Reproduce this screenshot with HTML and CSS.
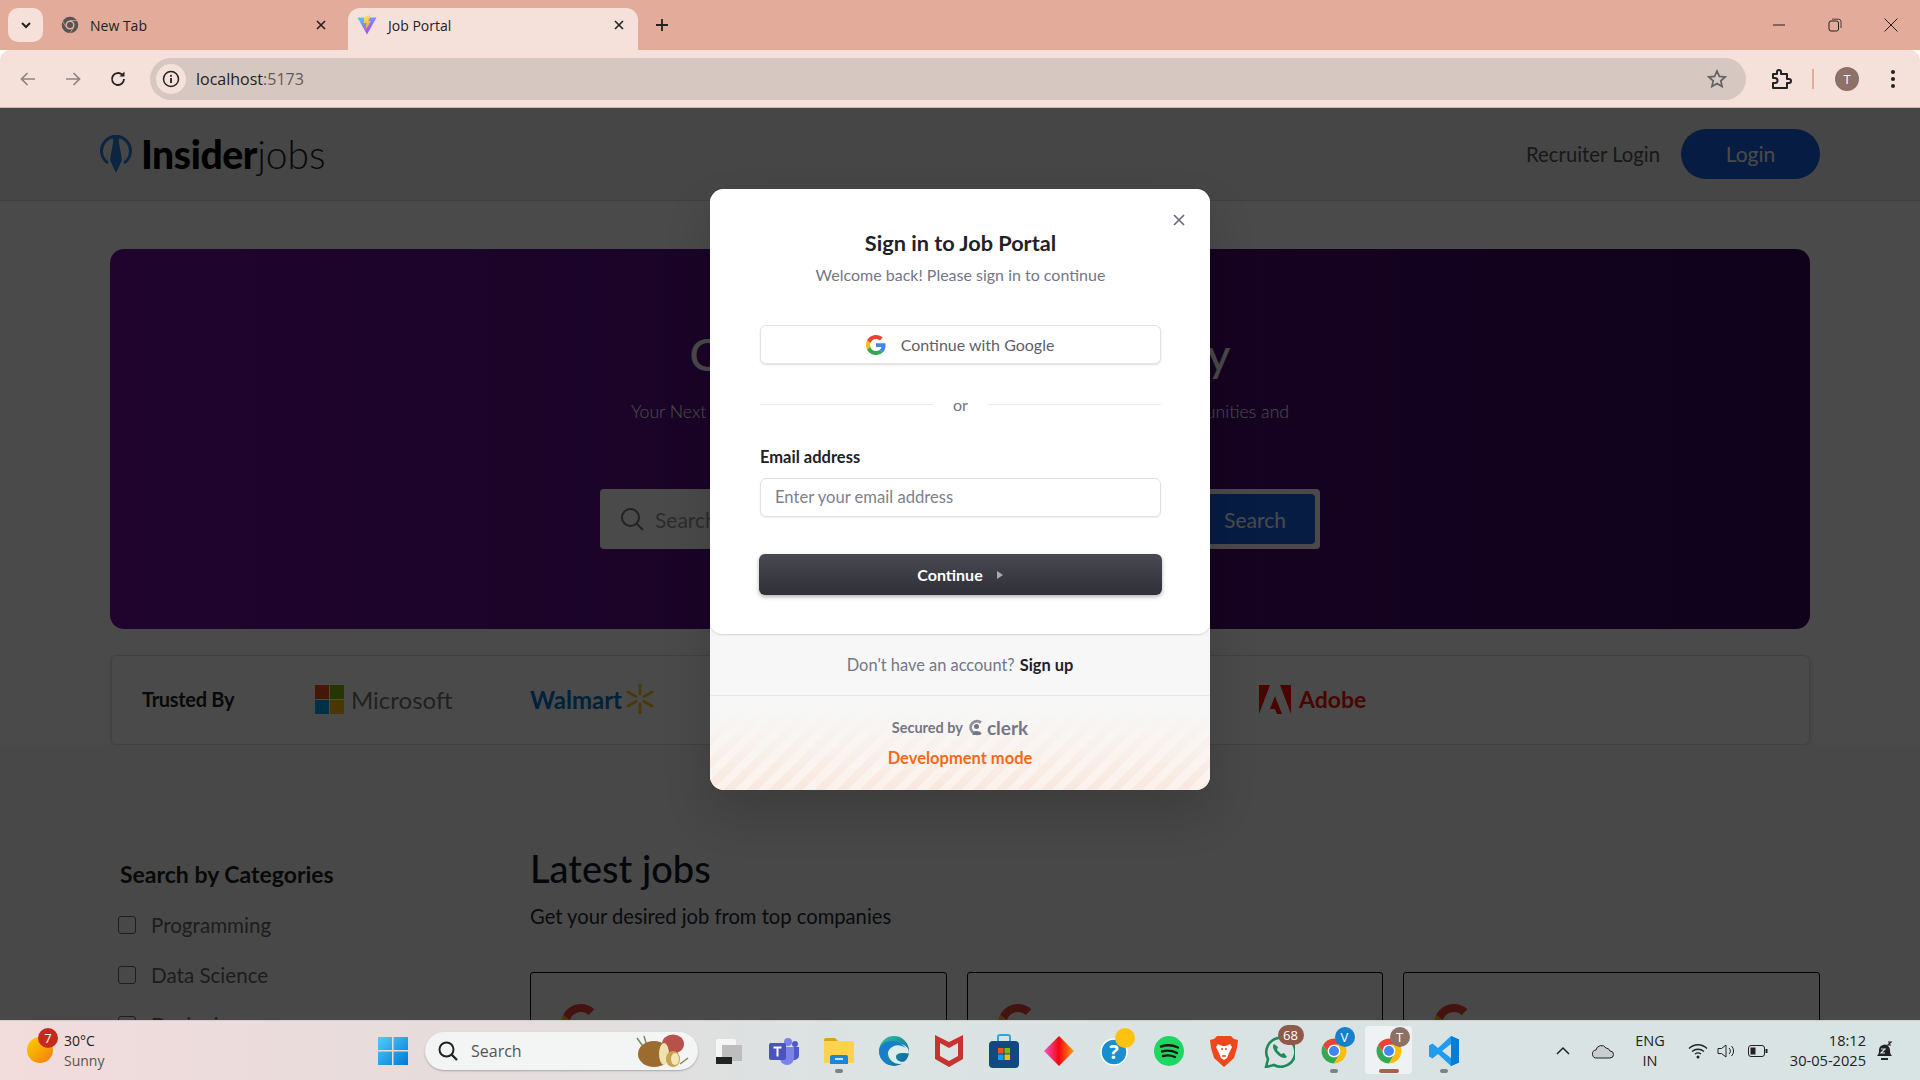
FILE: index.html
```html
<!DOCTYPE html>
<html lang="en">
<head>
    <meta charset="UTF-8">
    <meta name="viewport" content="width=device-width, initial-scale=1.0">
    <title>Job Portal</title>
    <link rel="stylesheet" href="styles.css">
</head>
<body>
    <svg class="sprite" width="0" height="0">
        <symbol id="google" viewBox="0 0 48 48">
            <path fill="#EA4335" d="M24 9.5c3.54 0 6.71 1.22 9.21 3.6l6.85-6.85C35.9 2.38 30.47 0 24 0 14.62 0 6.51 5.38 2.56 13.22l7.98 6.19C12.43 13.72 17.74 9.5 24 9.5z"/>
            <path fill="#4285F4" d="M46.98 24.55c0-1.57-.15-3.09-.38-4.55H24v9.02h12.94c-.58 2.96-2.26 5.48-4.78 7.18l7.73 6c4.51-4.18 7.09-10.36 7.09-17.65z"/>
            <path fill="#FBBC05" d="M10.53 28.59c-.48-1.45-.76-2.99-.76-4.59s.27-3.14.76-4.59l-7.98-6.19C.92 16.46 0 20.12 0 24c0 3.88.92 7.54 2.56 10.78l7.97-6.19z"/>
            <path fill="#34A853" d="M24 48c6.48 0 11.93-2.13 15.89-5.81l-7.73-6c-2.15 1.45-4.92 2.3-8.16 2.3-6.26 0-11.57-4.22-13.47-9.91l-7.98 6.19C6.51 42.62 14.62 48 24 48z"/>
        </symbol>
        <symbol id="chrome" viewBox="0 0 48 48">
            <path fill="#EA4335" d="M6.68 14A20 20 0 0 1 41.32 14H24A10 10 0 0 0 15.34 29Z"/>
            <path fill="#34A853" d="M6.68 14A20 20 0 0 0 24 44L32.66 29A10 10 0 0 1 15.34 29Z"/>
            <path fill="#FBBC05" d="M41.32 14H24A10 10 0 0 1 32.66 29L24 44A20 20 0 0 0 41.32 14Z"/>
            <circle cx="24" cy="24" r="10" fill="#fff"/>
            <circle cx="24" cy="24" r="8" fill="#4285F4"/>
        </symbol>
    </svg>

    <!-- browser tabs -->
    <div class="tabstrip">
        <div class="tab-search">
            <svg width="12" height="12" viewBox="0 0 12 12"><path d="M2 4l4 4 4-4" fill="none" stroke="#222" stroke-width="2"/></svg>
        </div>
        <div class="tab tab-new">
            <svg class="tab-icon" width="18" height="18" viewBox="0 0 48 48">
                <circle cx="24" cy="24" r="22" fill="#555"/>
                <circle cx="24" cy="24" r="12" fill="#e3ab9a"/>
                <circle cx="24" cy="24" r="8" fill="#555"/>
                <path d="M24 12h22M14 30L3 12M34 30L22 48" stroke="#e3ab9a" stroke-width="2"/>
            </svg>
            <span class="tab-title">New Tab</span>
            <svg class="tab-close" width="10" height="10" viewBox="0 0 10 10"><path d="M1 1l8 8M9 1l-8 8" stroke="#222" stroke-width="1.6"/></svg>
        </div>
        <div class="tab active">
            <svg class="tab-icon" width="20" height="20" viewBox="0 0 20 20">
                <defs>
                    <linearGradient id="viteA" x1="0" y1="0" x2="0.6" y2="1"><stop offset="0" stop-color="#41d1ff"/><stop offset="1" stop-color="#bd34fe"/></linearGradient>
                    <linearGradient id="viteB" x1="0" y1="0" x2="0.4" y2="1"><stop offset="0" stop-color="#ffea83"/><stop offset="1" stop-color="#ffa800"/></linearGradient>
                </defs>
                <path fill="url(#viteA)" d="M0.5 2.5L19.5 2.5 10 19.5Z"/>
                <path fill="url(#viteB)" d="M7.5 0.5L13.5 0.5 11.5 6 14 6 8.5 15 9.5 8 6.5 8Z"/>
            </svg>
            <span class="tab-title">Job Portal</span>
            <svg class="tab-close" width="10" height="10" viewBox="0 0 10 10"><path d="M1 1l8 8M9 1l-8 8" stroke="#222" stroke-width="1.6"/></svg>
        </div>
        <svg class="new-tab" width="14" height="14" viewBox="0 0 14 14"><path d="M7 1v12M1 7h12" stroke="#222" stroke-width="1.8"/></svg>
        <div class="win-controls">
            <svg width="14" height="14" viewBox="0 0 14 14"><path d="M1 7h12" stroke="#222"/></svg>
            <svg width="14" height="14" viewBox="0 0 14 14"><rect x="1" y="3" width="9.5" height="10" rx="2" fill="none" stroke="#222"/><path d="M4 1.2h6.5a2.5 2.5 0 0 1 2.5 2.5V10" fill="none" stroke="#222" stroke-width=".8"/></svg>
            <svg width="14" height="14" viewBox="0 0 14 14"><path d="M.5.5l13 13M13.5.5l-13 13" stroke="#222"/></svg>
        </div>
    </div>

    <!-- address bar -->
    <div class="toolbar">
        <svg class="nav-icon" width="18" height="18" viewBox="0 0 18 18"><path d="M16 9H3M8.5 3L2.5 9l6 6" fill="none" stroke="#8d8582" stroke-width="1.7"/></svg>
        <svg class="nav-icon" width="18" height="18" viewBox="0 0 18 18"><path d="M2 9h13M9.5 3l6 6-6 6" fill="none" stroke="#8d8582" stroke-width="1.7"/></svg>
        <svg class="nav-icon" width="18" height="18" viewBox="0 0 18 18"><path d="M15 9a6 6 0 1 1-1.8-4.3" fill="none" stroke="#222" stroke-width="1.8"/><path d="M15.5 1.5v5h-5z" fill="#222"/></svg>
        <div class="omnibox">
            <div class="site-info">
                <svg width="18" height="18" viewBox="0 0 18 18"><circle cx="9" cy="9" r="7.5" fill="none" stroke="#222" stroke-width="1.5"/><path d="M9 8v5M9 5v1.8" stroke="#222" stroke-width="1.8"/></svg>
            </div>
            <span class="url">localhost<span class="url-port">:5173</span></span>
            <svg class="star" width="20" height="20" viewBox="0 0 20 20"><path d="M10 2l2.4 5.4 5.8.6-4.4 3.9 1.3 5.7-5.1-3-5.1 3 1.3-5.7L1.8 8l5.8-.6z" fill="none" stroke="#5f6368" stroke-width="1.7"/></svg>
        </div>
        <svg class="ext-icon" width="22" height="22" viewBox="0 0 22 22"><path d="M3 6h4V4a2 2 0 0 1 4 0v2h6v5h2a2 2 0 0 1 0 4h-2v5H3v-5h2a2.5 2.5 0 0 0 0-5H3z" fill="none" stroke="#222" stroke-width="2" stroke-linejoin="round"/></svg>
        <div class="toolbar-sep"></div>
        <div class="avatar">T</div>
        <svg class="menu-dots" width="6" height="20" viewBox="0 0 6 20"><circle cx="3" cy="3" r="2" fill="#222"/><circle cx="3" cy="10" r="2" fill="#222"/><circle cx="3" cy="17" r="2" fill="#222"/></svg>
    </div>

    <!-- the app behind the modal -->
    <div class="page">
        <header class="navbar">
            <div class="logo">
                <svg width="32" height="40" viewBox="0 0 32 40">
                    <path d="M8 29A14.5 14.5 0 1 1 24 29" fill="none" stroke="#2a7fe0" stroke-width="3"/>
                    <path d="M12 1h8l-1.5 5 3.5 20L16 39 10 26l3.5-20z" fill="#2a7fe0"/>
                </svg>
                <span class="logo-text"><b>Insider</b>jobs</span>
            </div>
            <div class="nav-actions">
                <span class="recruiter">Recruiter Login</span>
                <span class="login-btn">Login</span>
            </div>
        </header>

        <main class="content">
            <section class="hero">
                <h1>Over 10,000+ jobs to apply</h1>
                <p>Your Next Big Career Move Starts Right Here - Explore the Best Job Opportunities and<br>Take the First Step Toward Your Future!</p>
                <div class="hero-search">
                    <svg width="24" height="24" viewBox="0 0 24 24"><circle cx="10.5" cy="10.5" r="8.5" fill="none" stroke="#777" stroke-width="2"/><path d="M17 17l6 6" stroke="#777" stroke-width="2"/></svg>
                    <span class="hero-placeholder">Search for jobs</span>
                    <span class="hero-btn">Search</span>
                </div>
            </section>

            <section class="trusted">
                <span class="trusted-title">Trusted By</span>
                <div class="brand brand-ms">
                    <svg width="29" height="29" viewBox="0 0 29 29">
                        <rect width="14" height="14" fill="#f25022"/><rect x="15" width="14" height="14" fill="#7fba00"/>
                        <rect y="15" width="14" height="14" fill="#00a4ef"/><rect x="15" y="15" width="14" height="14" fill="#ffb900"/>
                    </svg>
                    <span>Microsoft</span>
                </div>
                <div class="brand brand-walmart">
                    <span>Walmart</span>
                    <svg width="28" height="30" viewBox="0 0 28 30"><path d="M14 1v9M14 20v9M2 8l8 4.5M26 8l-8 4.5M2 22l8-4.5M26 22l-8-4.5" stroke="#ffc220" stroke-width="3" stroke-linecap="round"/></svg>
                </div>
                <div class="brand brand-adobe">
                    <svg width="32" height="29" viewBox="0 0 32 29"><path d="M0 0h11L0 29zM32 0H21l11 29zM16 11l7 18h-5l-2-5h-5z" fill="#fa0f00"/></svg>
                    <span>Adobe</span>
                </div>
            </section>

            <section class="listing">
                <aside class="filters">
                    <h3>Search by Categories</h3>
                    <label class="filter"><span class="check"></span>Programming</label>
                    <label class="filter"><span class="check"></span>Data Science</label>
                    <label class="filter"><span class="check"></span>Designing</label>
                </aside>
                <div class="jobs">
                    <h2>Latest jobs</h2>
                    <p>Get your desired job from top companies</p>
                    <div class="job-grid">
                        <div class="job-card"><svg width="40" height="40"><use href="#google"/></svg></div>
                        <div class="job-card"><svg width="40" height="40"><use href="#google"/></svg></div>
                        <div class="job-card"><svg width="40" height="40"><use href="#google"/></svg></div>
                    </div>
                </div>
            </section>
        </main>

        <div class="backdrop"></div>

        <!-- sign in modal -->
        <div class="modal">
            <div class="modal-card">
                <svg class="modal-close" width="12" height="12" viewBox="0 0 12 12"><path d="M1 1l10 10M11 1L1 11" stroke="#6a6b78" stroke-width="1.7"/></svg>
                <h2 class="modal-title">Sign in to Job Portal</h2>
                <p class="modal-sub">Welcome back! Please sign in to continue</p>
                <button class="google-btn">
                    <svg width="20" height="20"><use href="#google"/></svg>
                    Continue with Google
                </button>
                <div class="divider"><span>or</span></div>
                <label class="field-label">Email address</label>
                <div class="email-input">Enter your email address</div>
                <button class="continue-btn">
                    Continue
                    <svg width="8" height="8" viewBox="0 0 8 8"><path d="M1 0l6 4-6 4z" fill="#a9a9b0"/></svg>
                </button>
            </div>
            <div class="modal-signup">Don't have an account? <b>Sign up</b></div>
            <div class="modal-foot">
                <div class="secured">
                    Secured by
                    <svg width="16" height="17" viewBox="0 0 16 17"><path d="M14 2.5A7.8 7.8 0 1 0 14 14.5L11.8 12.3A4.8 4.8 0 1 1 11.8 4.7z" fill="#8e8f9b"/><circle cx="8.5" cy="7.5" r="2.5" fill="#747686"/><path d="M4.5 16a4 4 0 0 1 8 0z" fill="#747686"/></svg>
                    <span class="clerk">clerk</span>
                </div>
                <div class="dev-mode">Development mode</div>
            </div>
        </div>
    </div>

    <!-- windows taskbar -->
    <footer class="taskbar">
        <div class="weather">
            <span class="sun"></span>
            <span class="weather-badge">7</span>
            <div class="weather-text">
                <span>30°C</span>
                <span class="weather-sub">Sunny</span>
            </div>
        </div>
        <svg class="start" width="30" height="30" viewBox="0 0 30 30">
            <defs><linearGradient id="win" x1="0" y1="0" x2="1" y2="1"><stop offset="0" stop-color="#52cdfa"/><stop offset="1" stop-color="#0078d4"/></linearGradient></defs>
            <path fill="url(#win)" d="M0 1h14v13H0zM15.5 1H30v13H15.5zM0 15.5h14V29H0zM15.5 15.5H30V29H15.5z"/>
        </svg>
        <div class="task-search">
            <svg width="22" height="22" viewBox="0 0 22 22"><circle cx="9.5" cy="9.5" r="7" fill="none" stroke="#222" stroke-width="2"/><path d="M14.5 14.5l5.5 5.5" stroke="#222" stroke-width="2.4"/></svg>
            <span>Search</span>
            <svg class="potato" width="58" height="38" viewBox="0 0 58 38">
                <path d="M3 6l10 14M10 4l3 10M54 26l-8 6" stroke="#7d8a5c" stroke-width="1.5"/>
                <ellipse cx="39" cy="12" rx="11" ry="9.5" fill="#b8504c"/>
                <ellipse cx="20" cy="22" rx="16" ry="13" fill="#9c6b30"/>
                <ellipse cx="30" cy="22" rx="5" ry="11" fill="#f0e2ae"/>
                <ellipse cx="39" cy="27" rx="7" ry="8" fill="#c9a24e"/>
                <ellipse cx="41" cy="27" rx="4" ry="6" fill="#f3e7b8"/>
            </svg>
        </div>
        <div class="task-apps">
            <div class="app"><svg width="26" height="28" viewBox="0 0 26 28"><rect x="0" y="2" width="20" height="18" rx="2" fill="#f6f6f6"/><rect x="6" y="8" width="20" height="16" fill="#bdbdbd"/><rect x="0" y="20" width="16" height="7" fill="#222"/></svg></div>
            <div class="app"><svg width="30" height="28" viewBox="0 0 30 28"><circle cx="19" cy="5" r="4" fill="#7b83eb"/><circle cx="26" cy="7" r="3" fill="#5059c9"/><path d="M22 10h8v9a5 5 0 0 1-8 3z" fill="#5059c9"/><path d="M11 10h14v11a7 7 0 0 1-14 0z" fill="#7b83eb"/><rect x="0" y="6" width="17" height="17" rx="2" fill="#4b53bc"/><path d="M4.5 10.5h8M8.5 10.5v9" stroke="#fff" stroke-width="2"/></svg></div>
            <div class="app running"><svg width="30" height="28" viewBox="0 0 30 28"><path d="M0 3a2 2 0 0 1 2-2h9l3 3h-14z" fill="#d9a21b"/><path d="M0 4h28a2 2 0 0 1 2 2v20H0z" fill="#fcd34d"/><path d="M6 20a2 2 0 0 1 2-2h14a2 2 0 0 1 2 2v7H6z" fill="#1a86d8"/><path d="M11 22h8" stroke="#fff" stroke-width="1.5"/></svg></div>
            <div class="app"><svg width="30" height="30" viewBox="0 0 30 30"><defs><linearGradient id="edge" x1="0" y1="0" x2="1" y2="1"><stop offset="0" stop-color="#2fc6a0"/><stop offset="1" stop-color="#0c59a4"/></linearGradient></defs><circle cx="15" cy="15" r="15" fill="url(#edge)"/><path d="M30 17c0-6-5-9-10-9-6 0-11 4-11 9 0 6 5 11 12 11 3 0 5-1 7-3-5 2-11 0-11-4 0-3 3-4 6-4 4 0 5 1 7 0z" fill="#dceee9"/><path d="M0 15C1 8 7 5 13 5c6 0 10 3 14 7-3-2-8-4-12-2-5 2-8 7-6 13 1 2 2 4 4 6C7 29 0 23 0 15z" fill="#1a7dcc"/></svg></div>
            <div class="app"><svg width="28" height="32" viewBox="0 0 28 32"><path d="M0 0l14 7 14-7v24l-14 8-14-8zM5 8v13l9 5 9-5V8l-9 5z" fill="#c8322f" fill-rule="evenodd"/></svg></div>
            <div class="app"><svg width="30" height="34" viewBox="0 0 30 34"><path d="M9 8V3a2 2 0 0 1 2-2h8a2 2 0 0 1 2 2v5" fill="none" stroke="#29a8e0" stroke-width="2"/><rect y="7" width="30" height="27" rx="4" fill="#11487f"/><rect x="9" y="14" width="5.5" height="5.5" fill="#f25022"/><rect x="15.5" y="14" width="5.5" height="5.5" fill="#7fba00"/><rect x="9" y="20.5" width="5.5" height="5.5" fill="#00a4ef"/><rect x="15.5" y="20.5" width="5.5" height="5.5" fill="#ffb900"/></svg></div>
            <div class="app"><svg width="30" height="30" viewBox="0 0 30 30"><defs><linearGradient id="gem" x1="0" y1="0" x2="1" y2="0"><stop offset="0" stop-color="#f355c8"/><stop offset=".5" stop-color="#f4050f"/><stop offset="1" stop-color="#fca311"/></linearGradient></defs><path d="M15 0l15 15-15 15L0 15z" fill="url(#gem)"/></svg></div>
            <div class="app"><div class="app-wrap"><svg width="30" height="30" viewBox="0 0 30 30"><circle cx="15" cy="16" r="13" fill="#1a8fd0" stroke="#fff" stroke-width="1.5"/><text x="15" y="23" class="help-mark">?</text></svg><span class="dot-yellow"></span></div></div>
            <div class="app"><svg width="30" height="30" viewBox="0 0 30 30"><circle cx="15" cy="15" r="15" fill="#1ed760"/><path d="M7 10.5c6-2 12-1.5 17 1M8 15.5c5-1.5 10-1 15 1.5M9 20c4-1 8-.8 12 1" fill="none" stroke="#191414" stroke-width="2.4" stroke-linecap="round"/></svg></div>
            <div class="app"><svg width="28" height="32" viewBox="0 0 28 32"><path d="M7 1h14l3 3 4 1-1 8-3 10-10 9-10-9-3-10-1-8 4-1z" fill="#f0461c"/><path d="M8 9l4 2h4l4-2 2 3-3 6-2 5-3 2-3-2-2-5-3-6z" fill="#fff"/><path d="M11 14h2M15 14h2M12 21h4" stroke="#f0461c" stroke-width="1.5"/></svg></div>
            <div class="app"><div class="app-wrap"><svg width="32" height="34" viewBox="0 0 32 34"><path d="M3 33l2-8A14.5 14.5 0 1 1 11 31z" fill="none" stroke="#1f8a5b" stroke-width="2.6"/><path d="M11 10c-2 2-1 6 3 10s8 5 10 3l-3-4-3 1-4-4 1-3z" fill="#1f8a5b"/></svg><span class="app-badge">68</span></div></div>
            <div class="app running"><div class="app-wrap"><svg width="30" height="30"><use href="#chrome"/></svg><span class="app-badge badge-blue">V</span></div></div>
            <div class="app current"><div class="app-wrap"><svg width="30" height="30"><use href="#chrome"/></svg><span class="app-badge badge-t">T</span></div></div>
            <div class="app running"><svg width="30" height="30" viewBox="0 0 30 30"><path d="M22 0l8 3.5v23L22 30 9 18l-5.5 4.5L0 20.5v-11L3.5 7.5 9 12z" fill="#1f9cf0"/><path d="M22 8l-9 7 9 7z" fill="#d8e3e3"/><path d="M22 0l8 3.5v23L22 30z" fill="#0a7cd1"/></svg></div>
        </div>
        <div class="tray">
            <svg width="14" height="14" viewBox="0 0 14 14"><path d="M1 10l6-6 6 6" fill="none" stroke="#222" stroke-width="1.5"/></svg>
            <svg class="tray-cloud" width="22" height="16" viewBox="0 0 22 16"><path d="M5 15a4 4 0 0 1-1-8 5.5 5.5 0 0 1 10-2 4.5 4.5 0 0 1 4 3 3.5 3.5 0 0 1 0 7z" fill="#c9cdcd" stroke="#222"/></svg>
            <div class="lang"><span>ENG</span><span>IN</span></div>
            <svg class="tray-wifi" width="20" height="16" viewBox="0 0 20 16"><path d="M1 5.5c5-5 13-5 18 0M4 8.5c3.5-3 8.5-3 12 0M7 11c2-1.5 4-1.5 6 0" fill="none" stroke="#222" stroke-width="1.3"/><circle cx="10" cy="14" r="1.5" fill="#222"/></svg>
            <svg class="tray-vol" width="20" height="16" viewBox="0 0 20 16"><path d="M1 5.5h3.5L9 2v12L4.5 10.5H1z" fill="none" stroke="#222"/><path d="M12 5a4 4 0 0 1 0 6M14.5 3a7 7 0 0 1 0 10" fill="none" stroke="#222"/></svg>
            <svg class="tray-batt" width="20" height="14" viewBox="0 0 20 14"><rect x=".5" y="1.5" width="16" height="11" rx="2.5" fill="none" stroke="#222"/><rect x="2.5" y="3.5" width="5" height="7" fill="#222"/><rect x="17.5" y="5" width="2" height="4" fill="#222"/></svg>
            <div class="clock"><span>18:12</span><span>30-05-2025</span></div>
            <svg class="tray-bell" width="18" height="20" viewBox="0 0 18 20"><path d="M1 15c2-2 2-4 2-6a5.5 5.5 0 0 1 10-3 6 6 0 0 1 1 3c0 2 0 4 2 6z" fill="#222"/><rect x="5" y="17" width="7" height="2" fill="#222"/><path d="M5 8h4l-4 4h4" fill="none" stroke="#d8e3e3" stroke-width="1.2"/><path d="M12 1h3l-3 3h3" fill="none" stroke="#222" stroke-width="1.2"/></svg>
        </div>
    </footer>
</body>
</html>
```

FILE: styles.css
```css
* {
    box-sizing: border-box;
}
html, body {
    margin: 0;
    height: 100%;
}
body {
    width: 1920px;
    height: 1080px;
    overflow: hidden;
    display: flex;
    flex-direction: column;
    font-family: 'Open Sans', sans-serif;
    color: #222;
}
.sprite {
    position: absolute;
}

/* Browser chrome */
.tabstrip {
    height: 50px;
    background: #e3ab9a;
    display: flex;
    align-items: flex-end;
    padding-left: 8px;
    flex-shrink: 0;
}
.tab-search {
    width: 35px;
    height: 34px;
    margin-bottom: 8px;
    background: #f5e1da;
    border-radius: 10px;
    display: flex;
    align-items: center;
    justify-content: center;
}
.tab {
    height: 42px;
    display: flex;
    align-items: center;
    padding: 0 14px 8px 18px;
    font-size: 14px;
    border-radius: 12px 12px 0 0;
}
.tab-new {
    width: 297px;
}
.tab.active {
    width: 290px;
    background: #f5e1da;
    margin-left: 8px;
    padding-left: 9px;
}
.tab-icon {
    margin-right: 11px;
    flex-shrink: 0;
}
.tab-title {
    flex: 1;
}
.new-tab {
    margin: 0 0 18px 17px;
}
.win-controls {
    margin-left: auto;
    height: 50px;
    display: flex;
    align-items: center;
    gap: 42px;
    padding-right: 22px;
}
.toolbar {
    height: 58px;
    background: #f5e1da;
    border-bottom: 1px solid #cdb9b1;
    border-radius: 10px 10px 0 0;
    display: flex;
    align-items: center;
    padding: 1px 19px 0 19px;
    flex-shrink: 0;
}
.nav-icon {
    margin-right: 27px;
}
.nav-icon:nth-of-type(3) {
    margin-right: 23px;
}
.omnibox {
    width: 1596px;
    height: 42px;
    border-radius: 21px;
    background: #d6c7c0;
    display: flex;
    align-items: center;
    padding: 0 19px 0 6px;
    font-size: 16px;
}
.site-info {
    width: 30px;
    height: 30px;
    border-radius: 50%;
    background: #f5e1da;
    display: flex;
    align-items: center;
    justify-content: center;
    margin-right: 10px;
}
.url {
    flex: 1;
}
.url-port {
    color: #5f5c5a;
}
.ext-icon {
    margin-left: 24px;
}
.toolbar-sep {
    width: 2px;
    height: 20px;
    background: #e3ab9a;
    margin: 0 21px 0 20px;
}
.avatar {
    width: 24px;
    height: 24px;
    border-radius: 50%;
    background: #8d7066;
    color: #fff;
    font-size: 13px;
    display: flex;
    align-items: center;
    justify-content: center;
}
.menu-dots {
    margin-left: 31px;
}

/* The job portal page, dimmed by the backdrop */
.page {
    flex: 1;
    position: relative;
    overflow: hidden;
    background: #fff;
    font-family: 'Lato', sans-serif;
}
.navbar {
    height: 93px;
    background: #f0f0f0;
    border-bottom: 1px solid #d8d8d8;
    display: flex;
    align-items: center;
    justify-content: space-between;
    padding: 0 100px;
}
.logo {
    display: flex;
    align-items: center;
    gap: 9px;
}
.logo-text {
    font-size: 39px;
    font-weight: 300;
    color: #222;
}
.logo-text b {
    font-weight: 900;
    color: #000;
    letter-spacing: -0.4px;
}
.nav-actions {
    display: flex;
    align-items: center;
    gap: 21px;
    font-size: 20.3px;
    padding-bottom: 1px;
}
.recruiter {
    color: #555;
}
.login-btn {
    width: 139px;
    height: 50px;
    border-radius: 25px;
    background: #1560e6;
    color: #fff;
    font-size: 21px;
    display: flex;
    align-items: center;
    justify-content: center;
}
.content {
    padding: 48px 110px 0;
}
.hero {
    height: 380px;
    border-radius: 14px;
    background: linear-gradient(to right, #6e119e, #37075d);
    color: #fff;
    text-align: center;
    padding-top: 77px;
}
.hero h1 {
    margin: 0;
    font-size: 45px;
    line-height: 56px;
    font-weight: 500;
}
.hero p {
    margin: 17px 0 0;
    font-size: 17.7px;
    line-height: 26px;
    font-weight: 300;
}
.hero-search {
    width: 720px;
    height: 60px;
    margin: 38px auto 0;
    background: #fff;
    border-radius: 4px;
    display: flex;
    align-items: center;
    padding: 0 5px 0 20px;
    font-size: 21px;
    color: #999;
}
.hero-placeholder {
    flex: 1;
    text-align: left;
    margin-left: 11px;
}
.hero-btn {
    width: 120px;
    height: 50px;
    border-radius: 4px;
    background: #1560e6;
    color: #fff;
    display: flex;
    align-items: center;
    justify-content: center;
}
.trusted {
    height: 90px;
    margin: 26px 0 0 1px;
    border: 1px solid #dcdcdc;
    border-radius: 6px;
    box-shadow: 0 2px 6px rgba(0, 0, 0, 0.15);
    display: flex;
    align-items: center;
    padding: 0 0 2px 30px;
}
.trusted-title {
    font-size: 20px;
    font-weight: 700;
    letter-spacing: -0.3px;
    width: 173px;
}
.brand {
    display: flex;
    align-items: center;
    font-weight: 700;
}
.brand-ms {
    gap: 7px;
    font-size: 24px;
    font-weight: 400;
    color: #737373;
    width: 215px;
}
.brand-walmart {
    gap: 4px;
    font-size: 24px;
    color: #0071ce;
    width: 729px;
}
.brand-adobe {
    gap: 8px;
    font-size: 23px;
    color: #fa0f00;
}
.listing {
    display: flex;
    background: #f8f8f8;
    margin: 0 -110px;
    padding: 0 110px;
}
.filters {
    width: 420px;
    padding: 115px 0 0 8px;
}
.filters h3 {
    margin: 0 0 12px 2px;
    font-size: 23px;
    line-height: 28px;
    font-weight: 700;
}
.filter {
    display: flex;
    align-items: center;
    gap: 15px;
    height: 50px;
    font-size: 20.6px;
    color: #666;
}
.check {
    width: 18px;
    height: 18px;
    border: 1.5px solid #666;
    border-radius: 3px;
}
.jobs {
    flex: 1;
    padding-top: 99px;
    margin-right: -10px;
}
.jobs h2 {
    margin: 0;
    font-size: 38px;
    line-height: 48px;
    font-weight: 500;
    color: #111827;
}
.jobs p {
    margin: 10px 0 0;
    font-size: 20.2px;
    line-height: 28px;
    color: #1f2937;
}
.job-grid {
    display: grid;
    grid-template-columns: repeat(3, 1fr);
    gap: 20px;
    margin-top: 42px;
}
.job-card {
    height: 200px;
    border: 1px solid #000;
    border-radius: 3px;
    padding: 31px 30px;
}
.backdrop {
    position: absolute;
    inset: 0;
    background: rgba(0, 0, 0, 0.71);
}

/* Sign in modal */
.modal {
    position: absolute;
    left: 710px;
    top: 81px;
    width: 500px;
    height: 601px;
    border-radius: 14px;
    overflow: hidden;
    background: #f7f7f7;
    box-shadow: 0 24px 48px rgba(0, 0, 0, 0.16);
    display: flex;
    flex-direction: column;
}
.modal-card {
    position: relative;
    height: 445px;
    background: #fff;
    border-radius: 0 0 12px 12px;
    box-shadow: 0 1px 2px rgba(0, 0, 0, 0.14);
    padding: 40px 49px 0 50px;
    display: flex;
    flex-direction: column;
}
.modal-close {
    position: absolute;
    top: 25px;
    right: 25px;
}
.modal-title {
    margin: 0;
    text-align: center;
    font-size: 21.7px;
    line-height: 28px;
    font-weight: 700;
    color: #212126;
}
.modal-sub {
    margin: 7px 0 0;
    text-align: center;
    font-size: 16px;
    line-height: 22px;
    color: #747686;
}
.google-btn {
    height: 39px;
    margin-top: 39px;
    background: #fff;
    border: 1px solid #e4e4e7;
    border-radius: 6px;
    box-shadow: 0 1px 2px rgba(0, 0, 0, 0.14);
    font-family: inherit;
    font-size: 16px;
    color: #5f5f68;
    display: flex;
    align-items: center;
    justify-content: center;
    gap: 15px;
    padding-right: 7px;
}
.divider {
    display: flex;
    align-items: center;
    gap: 20px;
    margin-top: 30px;
    height: 20px;
    font-size: 16px;
    color: #747686;
}
.divider::before, .divider::after {
    content: "";
    flex: 1;
    height: 1px;
    background: #ececee;
}
.field-label {
    margin-top: 32px;
    font-size: 16.5px;
    line-height: 22px;
    font-weight: 700;
    color: #212126;
}
.email-input {
    height: 39px;
    margin-top: 10px;
    border: 1px solid #e0e0e3;
    border-radius: 6px;
    box-shadow: 0 1px 2px rgba(0, 0, 0, 0.08);
    padding-left: 14px;
    font-size: 16.6px;
    line-height: 37px;
    color: #7e7f8c;
}
.continue-btn {
    height: 41px;
    margin: 37px -1px 0;
    border: none;
    border-radius: 6px;
    background: linear-gradient(#484951, #2f3037);
    box-shadow: 0 2px 4px rgba(0, 0, 0, 0.3);
    color: #fff;
    font-family: inherit;
    font-size: 16px;
    font-weight: 700;
    display: flex;
    align-items: center;
    justify-content: center;
    gap: 13px;
}
.modal-signup {
    height: 62px;
    display: flex;
    align-items: center;
    justify-content: center;
    gap: 5px;
    font-size: 16.4px;
    color: #747686;
    border-bottom: 1px solid #e9e9ea;
}
.modal-signup b {
    color: #212126;
}
.modal-foot {
    flex: 1;
    background:
        linear-gradient(to bottom, #f7f7f7 15%, rgba(247, 247, 247, 0) 100%),
        repeating-linear-gradient(-45deg, #f9e9df 0 8px, #fcf2ec 8px 16px);
    display: flex;
    flex-direction: column;
    align-items: center;
    padding-top: 19px;
}
.secured {
    display: flex;
    align-items: center;
    gap: 5px;
    height: 24px;
    font-size: 14.5px;
    font-weight: 700;
    color: #747686;
}
.clerk {
    font-size: 19px;
    margin-left: -2px;
}
.dev-mode {
    margin-top: 8px;
    font-size: 16.5px;
    line-height: 22px;
    font-weight: 700;
    color: #f36b16;
}

/* Taskbar */
.taskbar {
    height: 60px;
    flex-shrink: 0;
    background: linear-gradient(to right, #f2dcdc, #e6dcdc 25%, #dbe3e3 45%, #d8e3e3);
    border-top: 1px solid #d2cfcf;
    display: flex;
    align-items: center;
    position: relative;
    font-size: 14px;
}
.weather {
    width: 378px;
    position: relative;
    height: 59px;
    padding-left: 64px;
    display: flex;
    align-items: center;
}
.sun {
    position: absolute;
    left: 27px;
    top: 16px;
    width: 26px;
    height: 26px;
    border-radius: 50%;
    background: linear-gradient(135deg, #ffd000, #f07a0a);
}
.weather-badge {
    position: absolute;
    left: 38px;
    top: 7px;
    width: 20px;
    height: 20px;
    border-radius: 50%;
    background: #c42b1c;
    color: #fff;
    font-size: 13px;
    display: flex;
    align-items: center;
    justify-content: center;
}
.weather-text {
    display: flex;
    flex-direction: column;
    line-height: 20px;
}
.weather-sub {
    color: #555;
}
.start {
    flex-shrink: 0;
}
.task-search {
    width: 273px;
    height: 38px;
    margin-left: 17px;
    border-radius: 19px;
    background: #f3f4f4;
    box-shadow: 0 1px 2px rgba(0, 0, 0, 0.25);
    display: flex;
    align-items: center;
    padding: 0 6px 0 12px;
    gap: 12px;
    font-size: 16px;
    color: #555;
    flex-shrink: 0;
}
.potato {
    margin-left: auto;
}
.task-apps {
    display: flex;
    margin-left: 3px;
}
.app {
    width: 55px;
    height: 59px;
    display: flex;
    align-items: center;
    justify-content: center;
    position: relative;
}
.app.running::after, .app.current::after {
    content: "";
    position: absolute;
    bottom: 7px;
    left: 50%;
    transform: translateX(-50%);
    width: 8px;
    height: 4px;
    border-radius: 2px;
    background: #7d8285;
}
.app.current::before {
    content: "";
    position: absolute;
    top: 5px;
    bottom: 6px;
    left: 4px;
    right: 4px;
    background: #eef2f2;
    border-radius: 4px;
}
.app.current::after {
    width: 20px;
    background: #a8634f;
}
.app-wrap {
    position: relative;
    display: flex;
}
.app-badge {
    position: absolute;
    right: -9px;
    top: -9px;
    width: 26px;
    height: 20px;
    border-radius: 10px;
    background: #8f5a4a;
    color: #fff;
    font-size: 13px;
    display: flex;
    align-items: center;
    justify-content: center;
}
.badge-blue {
    width: 20px;
    height: 20px;
    right: -6px;
    background: #1580d0;
}
.badge-t {
    width: 20px;
    height: 20px;
    right: -6px;
    background: #8d7066;
}
.dot-yellow {
    position: absolute;
    right: -6px;
    top: -8px;
    width: 20px;
    height: 20px;
    border-radius: 50%;
    background: #ffc20e;
}
.help-mark {
    font-size: 20px;
    font-weight: 700;
    fill: #fff;
    text-anchor: middle;
}
.tray {
    position: absolute;
    left: 1556px;
    right: 26px;
    height: 59px;
    display: flex;
    align-items: center;
}
.tray-cloud {
    margin-left: 22px;
}
.lang {
    width: 32px;
    margin-left: 20px;
    font-size: 14.5px;
    line-height: 20px;
    text-align: center;
    display: flex;
    flex-direction: column;
}
.tray-wifi {
    margin-left: 22px;
}
.tray-vol {
    margin-left: 9px;
}
.tray-batt {
    margin-left: 11px;
}
.clock {
    margin-left: auto;
    margin-right: 10px;
    padding-bottom: 2px;
    display: flex;
    flex-direction: column;
    text-align: right;
    line-height: 20px;
    font-size: 14.6px;
}
```
